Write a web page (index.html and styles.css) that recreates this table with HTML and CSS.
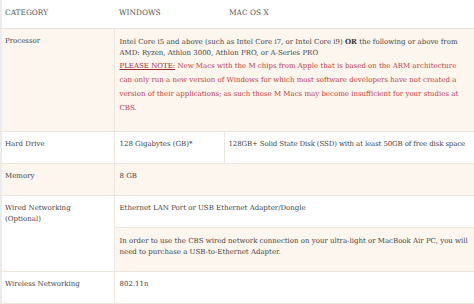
FILE: index.html
```html
<!DOCTYPE html>
<html>
<head>
<meta charset="utf-8">
<link rel="stylesheet" href="styles.css">
</head>
<body>
<table class="spec">
  <colgroup>
    <col class="c-cat">
    <col class="c-win">
    <col class="c-mac">
  </colgroup>
  <thead>
    <tr class="head">
      <th class="first">CATEGORY</th>
      <th>WINDOWS</th>
      <th>MAC OS X</th>
    </tr>
  </thead>
  <tbody>
    <tr class="cream">
      <td class="cat">Processor</td>
      <td colspan="2" class="val">
        <div class="intel">Intel Core i5 and above (such as Intel Core i7, or Intel Core i9) <b>OR</b> the following or above from AMD: Ryzen, Athlon 3000, Athlon PRO, or A-Series PRO</div>
        <div class="note"><span class="pn">PLEASE NOTE:</span> New Macs with the M chips from Apple that is based on the ARM architecture can only run a new version of Windows for which most software developers have not created a version of their applications; as such those M Macs may become insufficient for your studies at CBS.</div>
      </td>
    </tr>
    <tr class="white">
      <td class="cat">Hard Drive</td>
      <td class="val split">128 Gigabytes (GB)*</td>
      <td class="val mac">128GB+ Solid State Disk (SSD) with at least 50GB of free disk space</td>
    </tr>
    <tr class="cream">
      <td class="cat">Memory</td>
      <td colspan="2" class="val">8 GB</td>
    </tr>
    <tr class="white">
      <td class="cat" rowspan="2">Wired Networking<br>(Optional)</td>
      <td colspan="2" class="val">Ethernet LAN Port or USB Ethernet Adapter/Dongle</td>
    </tr>
    <tr class="cream">
      <td colspan="2" class="val sub">In order to use the CBS wired network connection on your ultra-light or MacBook Air PC, you will need to purchase a USB-to-Ethernet Adapter.</td>
    </tr>
    <tr class="white">
      <td class="cat">Wireless Networking</td>
      <td colspan="2" class="val">802.11n</td>
    </tr>
  </tbody>
</table>
</body>
</html>
```

FILE: styles.css
```css
html, body {
  margin: 0;
  padding: 0;
  background: #ffffff;
}
body {
  font-family: "DejaVu Serif", serif;
  font-size: 7px;
  color: #444444;
}
.spec {
  width: 474px;
  border-collapse: collapse;
  table-layout: fixed;
}
.c-cat { width: 114px; }
.c-win { width: 110px; }
.head th {
  text-align: left;
  font-weight: normal;
  font-size: 7.4px;
  color: #555555;
  padding: 7px 5px 10px;
  line-height: 11px;
  border-bottom: 1px solid #e8e2dc;
}
th.first,
td.cat {
  box-shadow: inset 2px 0 0 #ececec;
}
td {
  vertical-align: top;
  line-height: 11px;
  padding: 7px 5px 13px;
  border-bottom: 1px solid #ece6df;
}
td.val {
  border-left: 1px solid #ece6df;
}
td.split {
  border-right: 1px solid #ece6df;
}
td.mac {
  padding-left: 4px;
  padding-right: 0;
  white-space: nowrap;
  letter-spacing: -0.12px;
}
.cream td { background: #fdf6ee; }
.white td { background: #ffffff; }
.intel b {
  font-weight: bold;
  color: #333333;
}
.note {
  color: #c0403e;
  line-height: 14px;
  margin-bottom: 3px;
}
.pn {
  color: #9e2a2b;
  text-decoration: underline;
}
td.sub {
  padding-top: 8px;
  border-top: 1px solid #ece6df;
}
```
